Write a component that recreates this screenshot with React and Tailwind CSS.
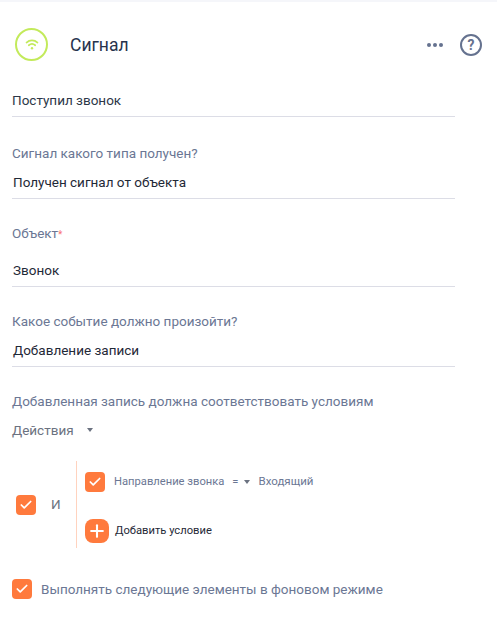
import { Check, Plus } from 'lucide-react';

const CheckBox = ({ className = '' }) => (
  <div className={`w-5 h-5 rounded-[4px] bg-[#ff7a3d] flex items-center justify-center shrink-0 ${className}`}>
    <Check className="w-3.5 h-3.5 text-white" strokeWidth={3} />
  </div>
);

const Field = ({ label, value, children, className = '' }) => (
  <div className={`pl-3 pr-[42px] ${className}`}>
    {label && <div className="text-[13.5px] leading-5 text-[#6b7794]">{label}{children}</div>}
    <div className="border-b border-[#dcdde6]">{value}</div>
  </div>
);

const Value = ({ text, className = '' }) => (
  <div className={`text-[13.5px] leading-5 text-[#1f2937] ${className}`}>{text}</div>
);

const Caret = ({ className = '' }) => (
  <span className={`w-0 h-0 border-x-[3.5px] border-x-transparent border-t-[4px] border-t-[#6b7280] ${className}`} />
);

export default function App() {
  return (
    <div className="w-[497px] h-[620px] bg-white overflow-hidden font-['Roboto',sans-serif] border-t-2 border-[#f5f6fa]">
      {/* Header */}
      <div className="h-[88px] pl-[15px] pr-[15px] flex items-center pb-[3px]">
        <div className="w-[33px] h-[33px] rounded-full border-2 border-[#c3ea5b] flex items-center justify-center">
          <svg width="14" height="11" viewBox="0 0 16 13" fill="none" stroke="#c3ea5b" strokeWidth="2" strokeLinecap="round">
            <path d="M1.5 4.2C5.2 .9 10.8 .9 14.5 4.2" />
            <path d="M4.2 7.4C6.4 5.6 9.6 5.6 11.8 7.4" />
            <circle cx="8" cy="11" r="1.4" fill="#c3ea5b" stroke="none" />
          </svg>
        </div>
        <div className="ml-[22px] mt-px text-[17.5px] text-[#27334d]">Сигнал</div>
        <div className="ml-auto flex items-center gap-[2px]">
          <span className="w-1 h-1 rounded-full bg-[#65728f]" />
          <span className="w-1 h-1 rounded-full bg-[#65728f]" />
          <span className="w-1 h-1 rounded-full bg-[#65728f]" />
        </div>
        <div className="ml-[17px] w-[22px] h-[22px] rounded-full border-2 border-[#65728f] flex items-center justify-center text-sm font-bold text-[#65728f]">?</div>
      </div>

      <Field value={<Value text="Поступил звонок" className="pb-[6px] text-[#2d3748]" />} />
      <Field className="mt-[26px]" label="Сигнал какого типа получен?" value={<Value text="Получен сигнал от объекта" className="pl-px pt-[9px] pb-[6px]" />} />
      <Field className="mt-6" label="Объект" value={<Value text="Звонок" className="pl-px pt-[15px] pb-[6px]" />}>
        <span className="text-[#f87171] text-[10px]">*</span>
      </Field>
      <Field className="mt-6" label="Какое событие должно произойти?" value={<Value text="Добавление записи" className="pl-px pt-[9px] pb-[6px]" />} />

      <div className="mt-6 pl-3 text-[13.5px] leading-5 text-[#6b7794]">Добавленная запись должна соответствовать условиям</div>
      <div className="mt-[9px] pl-3 flex items-center text-[13.5px] leading-5 text-[#6b7280]">
        Действия
        <Caret className="ml-[13px]" />
      </div>

      {/* Conditions */}
      <div className="mt-[21px] pl-4 flex items-center h-[87px]">
        <CheckBox />
        <span className="ml-[15px] w-[25px] text-[13.5px] text-[#6b7280]">И</span>
        <div className="h-full border-l border-[#ffd3bf] pl-2 flex flex-col">
          <div className="flex items-center mt-[11px]">
            <CheckBox />
            <span className="ml-[9px] text-[11.2px] text-[#6b7794]">Направление звонка</span>
            <span className="ml-2 text-[11.2px] text-[#6b7794]">=</span>
            <Caret className="ml-[5px]" />
            <span className="ml-[9px] text-[11.5px] text-[#6b7794]">Входящий</span>
          </div>
          <div className="flex items-center mt-[27px]">
            <div className="w-6 h-6 rounded-lg bg-[#ff7a3d] flex items-center justify-center">
              <Plus className="w-5 h-5 text-white" strokeWidth={2.5} />
            </div>
            <span className="ml-[6px] text-[11.2px] text-[#1f2937]">Добавить условие</span>
          </div>
        </div>
      </div>

      <div className="mt-[31px] pl-3 flex items-center">
        <CheckBox />
        <span className="ml-[9px] text-[13.5px] text-[#6b7794]">Выполнять следующие элементы в фоновом режиме</span>
      </div>
    </div>
  );
}
